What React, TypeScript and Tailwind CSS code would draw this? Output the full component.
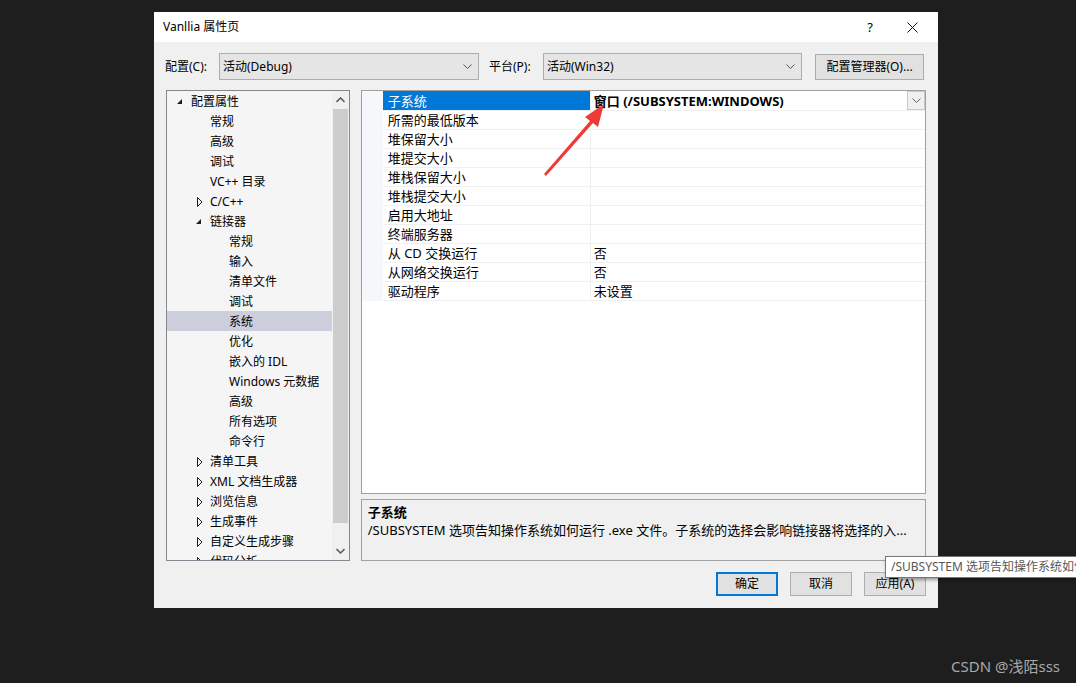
import React from "react";

type TreeItem = { label: string; level: 0 | 1 | 2; arrow?: "open" | "closed"; selected?: boolean };

const treeItems: TreeItem[] = [
  { label: "配置属性", level: 0, arrow: "open" },
  { label: "常规", level: 1 },
  { label: "高级", level: 1 },
  { label: "调试", level: 1 },
  { label: "VC++ 目录", level: 1 },
  { label: "C/C++", level: 1, arrow: "closed" },
  { label: "链接器", level: 1, arrow: "open" },
  { label: "常规", level: 2 },
  { label: "输入", level: 2 },
  { label: "清单文件", level: 2 },
  { label: "调试", level: 2 },
  { label: "系统", level: 2, selected: true },
  { label: "优化", level: 2 },
  { label: "嵌入的 IDL", level: 2 },
  { label: "Windows 元数据", level: 2 },
  { label: "高级", level: 2 },
  { label: "所有选项", level: 2 },
  { label: "命令行", level: 2 },
  { label: "清单工具", level: 1, arrow: "closed" },
  { label: "XML 文档生成器", level: 1, arrow: "closed" },
  { label: "浏览信息", level: 1, arrow: "closed" },
  { label: "生成事件", level: 1, arrow: "closed" },
  { label: "自定义生成步骤", level: 1, arrow: "closed" },
  { label: "代码分析", level: 1, arrow: "closed" },
];

const props: { name: string; value: string }[] = [
  { name: "子系统", value: "窗口 (/SUBSYSTEM:WINDOWS)" },
  { name: "所需的最低版本", value: "" },
  { name: "堆保留大小", value: "" },
  { name: "堆提交大小", value: "" },
  { name: "堆栈保留大小", value: "" },
  { name: "堆栈提交大小", value: "" },
  { name: "启用大地址", value: "" },
  { name: "终端服务器", value: "" },
  { name: "从 CD 交换运行", value: "否" },
  { name: "从网络交换运行", value: "否" },
  { name: "驱动程序", value: "未设置" },
];

const levelPad = ["pl-[8px]", "pl-[27px]", "pl-[46px]"];

function Chevron({ color = "#555" }: { color?: string }) {
  return (
    <svg width="9" height="6" viewBox="0 0 9 6">
      <path d="M0.5 0.5 L4.5 4.5 L8.5 0.5" fill="none" stroke={color} strokeWidth="1" />
    </svg>
  );
}

function TreeArrow({ kind }: { kind?: "open" | "closed" }) {
  if (kind === "open") {
    return (
      <svg width="7" height="7" viewBox="0 0 7 7" className="ml-[1px]">
        <path d="M6 1 L6 6 L1 6 Z" fill="#1e1e1e" />
      </svg>
    );
  }
  if (kind === "closed") {
    return (
      <svg width="6" height="10" viewBox="0 0 6 10" className="ml-[3px]">
        <path d="M0.5 0.5 L5 5 L0.5 9.5 Z" fill="none" stroke="#1e1e1e" strokeWidth="1" />
      </svg>
    );
  }
  return null;
}

function Combo({ value, width }: { value: string; width: string }) {
  return (
    <div
      className={`${width} h-[27px] flex items-center justify-between border border-[#adadad] bg-[#e5e5e5] pl-[3px] pr-[6px]`}
    >
      <span>{value}</span>
      <Chevron />
    </div>
  );
}

function Btn({ label, primary }: { label: string; primary?: boolean }) {
  return (
    <div
      className={`w-[62px] h-[24px] flex items-center justify-center bg-[#e1e1e1] ${
        primary ? "border-2 border-[#0078d7]" : "border border-[#adadad]"
      }`}
    >
      {label}
    </div>
  );
}

export default function App() {
  return (
    <div className="relative w-[1076px] h-[683px] overflow-hidden bg-[#1e1e1e] pl-[154px] pt-[12px] font-['Noto_Sans','Noto_Sans_CJK_SC',sans-serif] text-[12px] leading-[18px] text-black">
      <div className="w-[784px] h-[596px] flex flex-col bg-[#f0f0f0]">
        {/* title bar */}
        <div className="h-[30px] flex items-center bg-white">
          <span className="pl-[9px] flex-1">Vanllia 属性页</span>
          <span className="w-[44px] text-center text-[13px]">?</span>
          <span className="w-[46px] flex items-center justify-center pr-[6px]">
            <svg width="11" height="11" viewBox="0 0 11 11">
              <path d="M0.5 0.5 L10.5 10.5 M10.5 0.5 L0.5 10.5" stroke="#111" strokeWidth="1" />
            </svg>
          </span>
        </div>

        <div className="flex-1 flex flex-col px-[12px] pt-[11px] pb-[12px]">
          {/* config row */}
          <div className="h-[27px] flex items-center">
            <span className="w-[54px] -ml-[1px]">配置(C):</span>
            <Combo value="活动(Debug)" width="w-[260px]" />
            <span className="w-[54px] ml-[10px]">平台(P):</span>
            <Combo value="活动(Win32)" width="w-[259px]" />
            <div className="ml-[13px] w-[109px] h-[26px] flex items-center justify-center border border-[#adadad] bg-[#e1e1e1]">
              配置管理器(O)...
            </div>
          </div>

          {/* main */}
          <div className="mt-[10px] h-[471px] flex">
            {/* tree */}
            <div className="w-[184px] h-[471px] border border-[#828790] bg-[#f5f5f5] flex overflow-hidden">
              <div className="flex-1 flex flex-col overflow-hidden">
                {treeItems.map((it, i) => (
                  <div
                    key={i}
                    className={`h-[20px] shrink-0 flex items-center pt-[1px] ${levelPad[it.level]} ${
                      it.selected ? "bg-[#cccedb]" : ""
                    }`}
                  >
                    <div className="w-[16px] flex items-center">
                      <TreeArrow kind={it.arrow} />
                    </div>
                    <span className="whitespace-nowrap">{it.label}</span>
                  </div>
                ))}
              </div>
              {/* scrollbar */}
              <div className="w-[17px] flex flex-col bg-[#f0f0f0]">
                <div className="h-[18px] flex items-center justify-center">
                  <svg width="9" height="6" viewBox="0 0 9 6">
                    <path d="M0.5 5 L4.5 1 L8.5 5" fill="none" stroke="#606060" strokeWidth="1.6" />
                  </svg>
                </div>
                <div className="mx-[1px] h-[414px] bg-[#cdcdcd]" />
                <div className="flex-1 flex items-end justify-center pb-[6px]">
                  <svg width="9" height="6" viewBox="0 0 9 6">
                    <path d="M0.5 1 L4.5 5 L8.5 1" fill="none" stroke="#606060" strokeWidth="1.6" />
                  </svg>
                </div>
              </div>
            </div>

            {/* right column */}
            <div className="ml-[11px] w-[566px] flex flex-col text-[13px]">
              <div className="h-[404px] border border-[#a0a0a0] bg-white flex flex-col">
                {props.map((p, i) => (
                  <div key={i} className={`${i === 0 ? "h-[20px]" : "h-[19px]"} flex`}>
                    <div className="w-[21px] bg-[#f5f7fb]" />
                    <div className="flex-1 flex border-b border-[#f0f0f0]">
                      <div
                        className={`w-[208px] pl-[5px] flex items-center border-r border-[#f0f0f0] whitespace-nowrap ${
                          i === 0 ? "bg-[#0078d7] text-white" : ""
                        }`}
                      >
                        {p.name}
                      </div>
                      <div
                        className={`flex-1 flex items-center justify-between pl-[3px] whitespace-nowrap ${
                          i === 0 ? "font-bold" : ""
                        }`}
                      >
                        <span>{p.value}</span>
                        {i === 0 ? (
                          <div className="w-[18px] h-[19px] flex items-center justify-center border border-[#c8c8c8] bg-[#f0f0f0]">
                            <Chevron color="#666" />
                          </div>
                        ) : null}
                      </div>
                    </div>
                  </div>
                ))}
              </div>
              <div className="mt-[5px] h-[62px] border border-[#a0a0a0] bg-[#f0f0f0] pl-[6px] pt-[3px]">
                <div className="font-bold">子系统</div>
                <div className="whitespace-nowrap">
                  /SUBSYSTEM 选项告知操作系统如何运行 .exe 文件。子系统的选择会影响链接器将选择的入...
                </div>
              </div>
            </div>
          </div>

          {/* buttons */}
          <div className="mt-[11px] flex justify-end gap-[12px]">
            <Btn label="确定" primary />
            <Btn label="取消" />
            <Btn label="应用(A)" />
          </div>
        </div>
      </div>

      {/* red annotation arrow */}
      <svg className="absolute left-0 top-0" width="1076" height="683" viewBox="0 0 1076 683">
        <path d="M544 174 L590 121 L585 117 L604 104 L598 127 L593 123 L546 176 Z" fill="#ef3b35" />
      </svg>

      {/* tooltip */}
      <div className="absolute left-[885px] top-[556px] h-[22px] w-[220px] flex items-center pl-[5px] bg-white border border-[#767676] shadow-[1px_2px_3px_rgba(0,0,0,0.35)] text-[#575757] whitespace-nowrap">
        /SUBSYSTEM 选项告知操作系统如何运行 .exe 文件
      </div>

      {/* watermark */}
      <div className="absolute left-[951px] top-[656px] text-[15px] leading-[20px] text-[#a8a8a8]">
        CSDN @浅陌sss
      </div>
    </div>
  );
}
